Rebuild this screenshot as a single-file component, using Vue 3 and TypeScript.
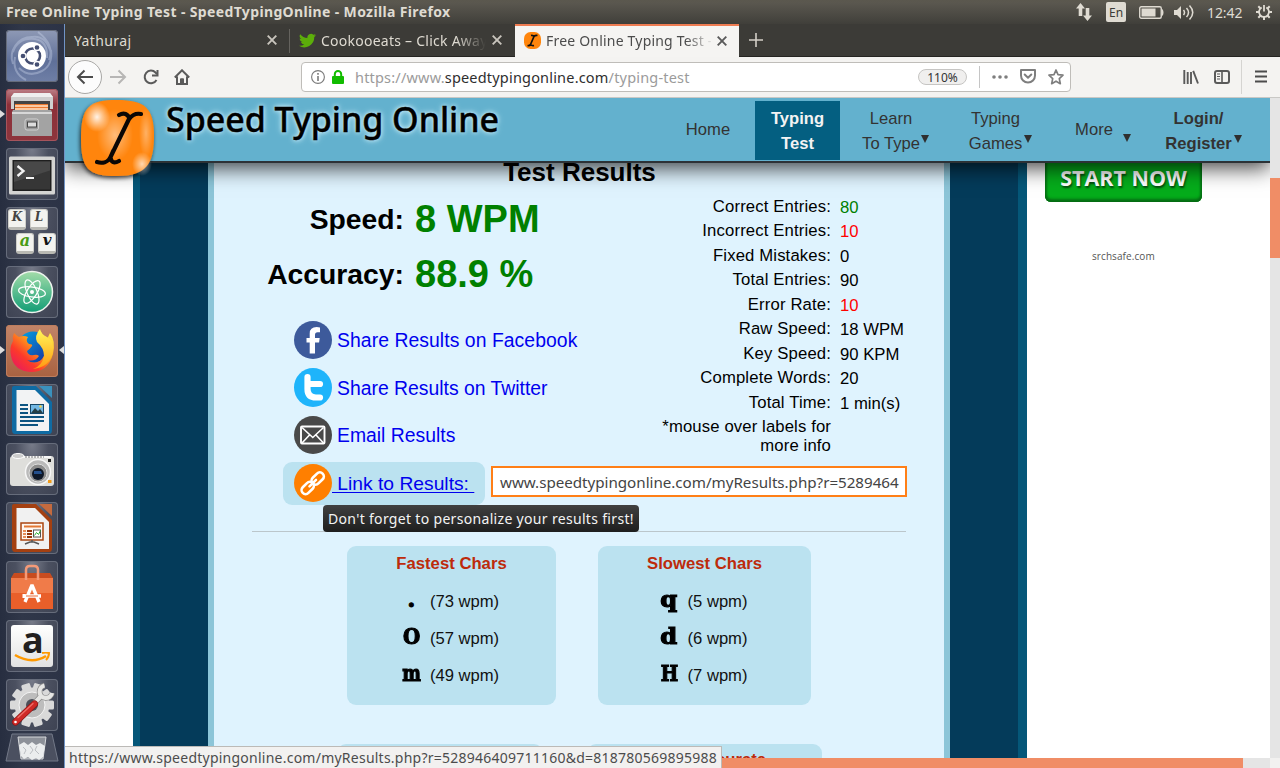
<script setup lang="ts">
interface Stat { label: string; value: string; tone?: string }
interface CharSpeed { glyph: string; speed: string; stretch: number }

const stats: Stat[] = [
  { label: 'Correct Entries:', value: '80', tone: 'good' },
  { label: 'Incorrect Entries:', value: '10', tone: 'bad' },
  { label: 'Fixed Mistakes:', value: '0' },
  { label: 'Total Entries:', value: '90' },
  { label: 'Error Rate:', value: '10', tone: 'bad' },
  { label: 'Raw Speed:', value: '18 WPM' },
  { label: 'Key Speed:', value: '90 KPM' },
  { label: 'Complete Words:', value: '20' },
  { label: 'Total Time:', value: '1 min(s)' },
]

const charCards: { title: string; kind: string; rows: CharSpeed[] }[] = [
  {
    title: 'Fastest Chars',
    kind: 'fast',
    rows: [
      { glyph: '.', speed: '(73 wpm)', stretch: 1 },
      { glyph: 'O', speed: '(57 wpm)', stretch: 0.9 },
      { glyph: 'm', speed: '(49 wpm)', stretch: 0.8 },
    ],
  },
  {
    title: 'Slowest Chars',
    kind: 'slow',
    rows: [
      { glyph: 'q', speed: '(5 wpm)', stretch: 1.1 },
      { glyph: 'd', speed: '(6 wpm)', stretch: 1.1 },
      { glyph: 'H', speed: '(7 wpm)', stretch: 0.84 },
    ],
  },
]
</script>

<template>
  <div class="desktop">
    <header class="panel">
      <span class="panel-title">Free Online Typing Test - SpeedTypingOnline - Mozilla Firefox</span>
      <div class="indicators">
        <svg class="i-net" width="18" height="18" viewBox="0 0 18 18" fill="#dfdbd2"><path d="M5.5 0 10 5.500H7.300V13H3.700V5.500H1zM12.500 18 8 12.500h2.700V5h3.600v7.500H17z" /></svg>
        <span class="lang">En</span>
        <svg class="i-bat" width="25" height="13" viewBox="0 0 25 13"><rect x=".75" y=".75" width="21.500" height="11.500" rx="1.500" fill="none" stroke="#dfdbd2" stroke-width="1.400" /><rect x="2.500" y="2.500" width="14" height="8" fill="#dfdbd2" /><path d="M23 3.500q1.500 3 0 6" fill="none" stroke="#dfdbd2" stroke-width="1.500" /></svg>
        <svg class="i-vol" width="21" height="17" viewBox="0 0 21 17"><path d="M0 6h3l4-4v13l-4-4H0z" fill="#dfdbd2" /><path d="M9.500 6q2 2.500 0 5M12.500 4q4 4.500 0 9M15.500 1.500q6.500 7 0 14" fill="none" stroke="#dfdbd2" stroke-width="1.500" /></svg>
        <span class="clock">12:42</span>
        <svg class="i-gear" width="16" height="16" viewBox="0 0 16 16" fill="none" stroke="#dfdbd2"><path d="M5.700 3.500a5 5 0 1 0 4.600 0" stroke-width="1.800" /><path d="M8 1v6.500" stroke-width="1.800" /><path d="M2.300 2.300 4.500 4.500M13.700 2.300 11.500 4.500M0 8h3M13 8h3M2.300 13.700l2.200-2.200M13.700 13.700l-2.200-2.200M8 13v3" stroke-width="2" /></svg>
      </div>
    </header>

    <div class="workspace">
      <nav class="launcher">
        <div class="tile dash">
          <svg width="52" height="52" viewBox="0 0 52 52" fill="none">
            <path d="M7 34A20 20 0 0 1 26 7q14-2 19 16M45 20q2 15-9 21-13 7-23-3M7 22Q12 7 29 9q13 2 12 19M20 50Q6 43 9 27M32 2q17 13 11 28" stroke="#c9d3e8" stroke-opacity=".4" stroke-width="2" />
            <circle cx="26" cy="26" r="14" fill="#fff" />
            <circle cx="26.500" cy="26" r="7.500" stroke="#454f72" stroke-width="2.600" />
            <g fill="#454f72" stroke="#fff" stroke-width="1.300"><circle cx="17" cy="26" r="3" /><circle cx="31" cy="17.500" r="3" /><circle cx="31" cy="34.500" r="3" /></g>
          </svg>
        </div>
        <div class="tile files">
          <span class="arrow-left"></span>
          <svg width="52" height="52" viewBox="0 0 52 52">
            <path d="M8 4h36l3 4v12H5V8z" fill="#cfcfcf" /><path d="M8 4h36l3 4H5z" fill="#efefef" />
            <rect x="8" y="12" width="36" height="14" fill="#444" /><path d="M9 15h11l2 0h20v11H9z" fill="#ec7a30" /><path d="M9 17h33M9 20h33" stroke="#ffe3c8" stroke-width="1.300" />
            <path d="M7 21h38l1 2v24H6V23z" fill="#a3a3a3" /><path d="M6 23h40v2H6z" fill="#d8d8d8" />
            <rect x="19" y="30" width="13.500" height="11" rx="2" fill="#9a9a9a" stroke="#d0d0d0" /><rect x="21.500" y="33" width="9" height="5" fill="#ddd" stroke="#444" stroke-width="1" />
          </svg>
        </div>
        <div class="tile">
          <svg width="52" height="52" viewBox="0 0 52 52">
            <rect x="3" y="8.500" width="46" height="38" rx="1.500" fill="#d4d4d2" /><rect x="6.500" y="12" width="39" height="31" fill="#1e1e1e" /><rect x="8" y="13.500" width="36" height="28" fill="#363636" /><path d="M8 13.500h36v9L8 34z" fill="#484848" />
            <path d="m11.500 18 6 5-6 5" stroke="#f4f4f4" stroke-width="2.300" fill="none" /><path d="M20 30h8" stroke="#f4f4f4" stroke-width="2" />
          </svg>
        </div>
        <div class="tile keys">
          <span class="key">K</span><span class="key">L</span><span class="key green">a</span><span class="key black">v</span>
        </div>
        <div class="tile">
          <svg width="52" height="52" viewBox="0 0 52 52">
            <defs><linearGradient id="atomFill" x1="0" y1="0" x2="0" y2="1"><stop offset="0" stop-color="#a3dca9" /><stop offset="1" stop-color="#119d75" /></linearGradient></defs>
            <circle cx="26" cy="26" r="20.500" fill="url(#atomFill)" stroke="#eef3ee" stroke-width="1.500" />
            <g fill="none" stroke="#fff" stroke-width="1.200"><ellipse cx="26" cy="26" rx="13.500" ry="5" transform="rotate(8 26 26)" /><ellipse cx="26" cy="26" rx="13" ry="5" transform="rotate(66 26 26)" /><ellipse cx="26" cy="26" rx="13" ry="5" transform="rotate(122 26 26)" /></g>
            <circle cx="26" cy="26" r="2" fill="#fff" />
          </svg>
        </div>
        <div class="tile firefox">
          <span class="arrow-left"></span><span class="arrow-right"></span>
          <svg width="52" height="52" viewBox="0 0 52 52">
            <defs>
              <linearGradient id="fox" x1="1" y1="0" x2="0" y2="1"><stop offset="0" stop-color="#fff44f" /><stop offset=".35" stop-color="#ffa51a" /><stop offset=".65" stop-color="#fc3a2a" /><stop offset="1" stop-color="#e2106f" /></linearGradient>
              <linearGradient id="globe" x1="0" y1="0" x2="1" y2="1"><stop offset="0" stop-color="#00a7e6" /><stop offset="1" stop-color="#1b2f9c" /></linearGradient>
              <linearGradient id="flame" x1="0" y1="0" x2="0" y2="1"><stop offset="0" stop-color="#fff85a" /><stop offset="1" stop-color="#ff9a12" /></linearGradient>
            </defs>
            <circle cx="27" cy="22" r="15.500" fill="url(#globe)" />
            <path d="M8 8q3 3 5 4 5-2 9 0-3 4 1 7 4 0 3 2-2 3-5 5 1 5 7 4 3-1 5 1-4 6-12 4 8 6 15-1 5-6 2-14l6-12q6 8 3 21-5 18-22 18Q8 46 5 31 3 23 7 16q-1-4 1-8z" fill="url(#fox)" />
            <path d="M34 4q-6 7-3 13 7 6 7 14-2 10-11 13 17-2 20-17Q48 15 41 12q-6-3-7-8z" fill="url(#flame)" />
          </svg>
        </div>
        <div class="tile">
          <svg width="52" height="52" viewBox="0 0 52 52">
            <path d="M8 2h22l16 16v28q0 4-3 4H9q-3 0-3-4V4q0-2 2-2z" fill="#0f6ba3" /><path d="M33 2h13v12z" fill="#3a91bd" />
            <path d="M10.500 6H29l14 14v27H10.500z" fill="#f2f3f4" /><rect x="24" y="20" width="14" height="10" fill="#174766" /><rect x="25" y="21" width="12" height="8" fill="#72b8e4" /><path d="m25 29 4-5 3 3 2-2 3 4z" fill="#263f45" /><circle cx="34.500" cy="22.500" r="1.200" fill="#f8d44a" />
            <path d="M14 21h8M14 25h8M14 29h8M14 33h24M14 37h24M14 41h18" stroke="#0d5582" stroke-width="1.800" />
          </svg>
        </div>
        <div class="tile">
          <svg width="52" height="52" viewBox="0 0 52 52">
            <rect x="4" y="13" width="44" height="30" rx="3" fill="#dededb" /><path d="M7 13h38v2H7z" fill="#f7f7f7" /><ellipse cx="12" cy="13" rx="6" ry="2.500" fill="#ccc" stroke="#fff" /><path d="M19 14h19" stroke="#777" stroke-dasharray="2 1" />
            <rect x="42" y="16" width="3" height="3" fill="#222" /><circle cx="32" cy="29" r="12.500" fill="#bababa" stroke="#f7f7f7" stroke-width="1.500" /><circle cx="32" cy="30" r="9" fill="#8c8c8c" stroke="#ddd" /><circle cx="32" cy="31" r="6" fill="#0e1828" /><path d="M28 28h7l1 3h-8z" fill="#244f8c" />
            <rect x="42" y="37" width="3.500" height="3" fill="#f29b17" />
          </svg>
        </div>
        <div class="tile">
          <svg width="52" height="52" viewBox="0 0 52 52">
            <path d="M8 2h22l16 16v28q0 4-3 4H9q-3 0-3-4V4q0-2 2-2z" fill="#a44011" /><path d="M33 2h13v12z" fill="#c46a3e" />
            <path d="M10.500 6H29l14 14v27H10.500z" fill="#f1f1f1" /><rect x="15" y="21" width="22" height="17" fill="#fff7f1" stroke="#aa4511" stroke-width="1.500" /><path d="M18 24.500h17" stroke="#e27835" stroke-width="2" />
            <path d="M17 29h3M17 32h3M17 35h3" stroke="#e78d57" stroke-width="2" /><path d="M21 29h5M21 32h5M21 35h5" stroke="#943509" stroke-width="2" /><rect x="27.500" y="28" width="7" height="7" fill="#fff" stroke="#555" /><path d="m28.500 33.500 2-3 2 2 2-4" fill="none" stroke="#2aae32" /><path d="M26 38v2m-7 2 5-2h4l5 2" fill="none" stroke="#555" stroke-width="1.500" />
          </svg>
        </div>
        <div class="tile">
          <svg width="52" height="52" viewBox="0 0 52 52">
            <path d="M5 17h42v31H5z" fill="#e95f2a" /><path d="m5 17 3-5h36l3 5z" fill="#c84c1f" /><path d="M5 17h42v15H5z" fill="#f07b49" /><path d="M20 19V9q0-4 4-4h4q4 0 4 4v10" fill="none" stroke="#f49a78" stroke-width="2.500" />
            <path d="M19 41 26 24l7 17M17 35h18" fill="none" stroke="#fff" stroke-width="3.300" stroke-linejoin="bevel" /><path d="M16.500 35h3" stroke="#fff" stroke-width="4" /><path d="M20 35h12" stroke="#e96b37" stroke-width="1" />
          </svg>
        </div>
        <div class="tile amazon">
          <span class="amazon-a">a</span>
          <svg width="36" height="12" viewBox="0 0 36 12"><path d="M1 3q17 10 31 1" fill="none" stroke="#f90" stroke-width="2.500" /><path d="M28 1q4-1 7 0 0 4-3 7" fill="none" stroke="#f90" stroke-width="2" /></svg>
        </div>
        <div class="tile">
          <svg width="52" height="52" viewBox="0 0 52 52">
            <g fill="#d9d9d9"><circle cx="26" cy="26" r="17.500" /><g v-for="n in 5" :key="n"><rect x="21.500" y="4" width="9" height="44" rx="1.500" :transform="`rotate(${n * 36 - 18} 26 26)`" /></g></g>
            <circle cx="26" cy="26" r="13" fill="#bdbdbd" stroke="#f4f4f4" /><circle cx="26" cy="26" r="6" fill="#4b4e58" />
            <g fill="none"><path d="M24 29 36 16M38.500 6.500A6.300 6.300 0 1 0 46 14" stroke="#8a8a8a" stroke-width="5.600" /><path d="M24 29 36 16M38.500 6.500A6.300 6.300 0 1 0 46 14" stroke="#e6e6e4" stroke-width="4.200" /></g>
            <g fill="none" stroke-linecap="round"><path d="M28.500 25 9.500 43" stroke="#8b1514" stroke-width="7" /><path d="M28.500 25 9.500 43" stroke="#cf2a27" stroke-width="5.600" /><path d="M27 24.500 12 38.500" stroke="#ee6f68" stroke-width="1.300" /></g><circle cx="9.500" cy="43" r="1.300" fill="#fff" />
          </svg>
        </div>
        <svg class="trash" width="56" height="30" viewBox="0 0 56 30">
          <path d="M8 1h40l6 27H2z" fill="#4b5060" stroke="#737988" /><path d="M14 4h28l-3 22H17z" fill="#a9adb2" fill-opacity=".7" stroke="#d6d8db" /><path d="m15 12 5-3 4 3 4-3 4 3 4-2 5 3-2 11-4 3-3-2-4 2-4-3-4 2-3-3z" fill="#ebedee" /><path d="m19 14 3 3-2 4M26 13l3 4-3 4M33 13l-2 4 4 4" fill="none" stroke="#bbbec2" />
        </svg>
      </nav>

      <main class="browser">
        <div class="tabs">
          <div class="tab t1"><span class="tab-text yath">Yathuraj</span><svg class="x" width="10" height="10" viewBox="0 0 10 10"><path d="m.7.7 8.600 8.600M9.300.7.7 9.300" /></svg></div>
          <div class="tab t2">
            <svg class="bird" width="17" height="17" viewBox="0 0 24 24" fill="#5cae0a"><path d="M24 4.600a10 10 0 0 1-2.800.8 5 5 0 0 0 2.200-2.700 10 10 0 0 1-3.100 1.200 5 5 0 0 0-8.400 4.500A14 14 0 0 1 1.700 3.100a5 5 0 0 0 1.500 6.600 5 5 0 0 1-2.200-.6 5 5 0 0 0 3.900 4.900 5 5 0 0 1-2.200.1 5 5 0 0 0 4.600 3.400A10 10 0 0 1 0 19.500 14 14 0 0 0 21.500 7.100 10 10 0 0 0 24 4.600z" /></svg>
            <span class="tab-text cook">Cookooeats – Click Away</span><svg class="x" width="10" height="10" viewBox="0 0 10 10"><path d="m.7.7 8.600 8.600M9.300.7.7 9.300" /></svg>
          </div>
          <div class="tab t3">
            <svg width="17" height="17" viewBox="0 0 17 17"><rect width="17" height="17" rx="6.500" fill="#ff850c" /><path d="M7 3.500q2-.5 3 1 1.500-1.500 3.500-1M10 4.500l-3.500 8M3.500 13.500q2 .5 3-1 1.500 1.500 3.500 1" fill="none" stroke="#111" stroke-width="1.700" /></svg>
            <span class="tab-text free">Free Online Typing Test -</span><svg class="x" width="10" height="10" viewBox="0 0 10 10"><path d="m.7.7 8.600 8.600M9.300.7.7 9.300" /></svg>
          </div>
          <svg class="plus" width="14" height="14" viewBox="0 0 14 14"><path d="M7 0v14M0 7h14" stroke="#d3cfc7" stroke-width="1.600" /></svg>
        </div>

        <div class="toolbar">
          <span class="back"><svg width="18" height="16" viewBox="0 0 18 16" fill="none" stroke="#4c4c4c" stroke-width="2"><path d="M17 8H2M8.500 1.500 2 8l6.500 6.500" /></svg></span>
          <svg class="fwd" width="18" height="16" viewBox="0 0 18 16" fill="none" stroke="#b7b6b5" stroke-width="2"><path d="M1 8h15M9.500 1.500 16 8l-6.500 6.500" /></svg>
          <svg class="reload" width="16" height="16" viewBox="0 0 16 16" fill="none" stroke="#5a5a5a" stroke-width="2"><path d="M13.500 11A6.300 6.300 0 1 1 12.500 3.500L14 5.200" /><path d="M14.500 1v5.500H9" /></svg>
          <svg class="home" width="16" height="16" viewBox="0 0 16 16" fill="none" stroke="#5a5a5a" stroke-width="2"><path d="M.8 8.500 8 1.300l7.200 7.200M3 7.500V15h10V7.500" /><path d="M6.500 14.500V9.800h3v4.700" fill="#5a5a5a" stroke-width="1" /></svg>
          <div class="url">
            <svg class="info" width="14" height="14" viewBox="0 0 14 14" fill="none" stroke="#7a7a7a"><circle cx="7" cy="7" r="6.400" stroke-width="1.100" /><path d="M7 6v5M7 3v1.700" stroke-width="1.600" /></svg>
            <svg class="lock" width="12" height="14" viewBox="0 0 12 14"><rect y="6" width="12" height="8" rx="1" fill="#12bc00" /><path d="M2.800 6.500V4.200a3.200 3.200 0 0 1 6.400 0v2.300" fill="none" stroke="#12bc00" stroke-width="2" /></svg>
            <span class="address">https://www.<b>speedtypingonline.com</b>/typing-test</span>
            <span class="zoom">110%</span><i class="vsep"></i>
            <svg class="dots" width="16" height="4" viewBox="0 0 16 4" fill="#7e7e7e"><circle cx="2" cy="2" r="1.800" /><circle cx="8" cy="2" r="1.800" /><circle cx="14" cy="2" r="1.800" /></svg>
            <svg class="pocket" width="16" height="15" viewBox="0 0 16 15" fill="none" stroke="#7e7e7e" stroke-width="2" stroke-linejoin="round"><path d="M1 1h14v5.500a7 7 0 0 1-14 0z" /><path d="M4.700 5.500 8 8.700l3.300-3.200" stroke-linecap="round" /></svg>
            <svg class="star" width="16" height="16" viewBox="0 0 16 16" fill="none" stroke="#7e7e7e" stroke-width="1.700" stroke-linejoin="round"><path d="m8 1 2 4.700 5 .5-3.700 3.400 1 5.100L8 12.200l-4.300 2.500 1-5.100L1 6.200l5-.5z" /></svg>
          </div>
          <svg class="library" width="16" height="14" viewBox="0 0 16 14" stroke="#5a5a5a" stroke-width="1.900"><path d="M1.300 0v14M4.700 2v12M8 2v12M10.200.8 15 13.500" /></svg>
          <svg class="sidebar" width="16" height="14" viewBox="0 0 16 14" fill="none" stroke="#5a5a5a"><rect x="1" y="1" width="14" height="12" rx="2" stroke-width="2" /><path d="M8 1v12" stroke-width="1.600" /><path d="M3 4h3M3 6.500h3M3 9h3" stroke-width="1.200" /></svg>
          <i class="tsep"></i>
          <svg class="menu" width="12" height="13" viewBox="0 0 12 13" stroke="#4c4c4c" stroke-width="2"><path d="M0 1.500h12M0 6.500h12M0 11.500h12" /></svg>
        </div>

        <div class="view">
          <div class="page">
            <header class="site">
              <svg class="logo" width="86" height="88" viewBox="0 0 86 88">
                <defs>
                  <radialGradient id="shine"><stop offset="0" stop-color="#fff" stop-opacity=".9" /><stop offset="1" stop-color="#fff" stop-opacity="0" /></radialGradient>
                  <filter id="drop" x="-20%" y="-20%" width="150%" height="150%"><feDropShadow dx="-1" dy="2" stdDeviation="2" flood-opacity=".75" /></filter>
                </defs>
                <path d="M42 3C70 3 79 11 79 39S71 79 42 79 6 72 6 41 14 3 42 3z" fill="#ff850b" filter="url(#drop)" />
                <ellipse cx="22" cy="20" rx="13" ry="15" fill="url(#shine)" /><ellipse cx="67" cy="67" rx="10" ry="12" fill="url(#shine)" opacity=".75" /><ellipse cx="40" cy="38" rx="18" ry="26" fill="url(#shine)" opacity=".5" /><ellipse cx="71" cy="36" rx="7" ry="25" fill="url(#shine)" opacity=".4" />
                <path d="M44 18c5-3 9-1 10.500 3.500 3-4 6-5.500 11.500-4.500M54 22 36 59M22 65c5 1.500 11 .5 13.500-5 .5 5 3 7 8.500 4" fill="none" stroke="#0b0705" stroke-width="4.200" stroke-linecap="round" />
              </svg>
              <span class="brand">Speed Typing Online</span>
              <ul class="nav">
                <li class="n-home">Home</li>
                <li class="n-test">Typing<br />Test</li>
                <li class="n-learn">Learn<br />To Type<i></i></li>
                <li class="n-games">Typing<br />Games<i></i></li>
                <li class="n-more">More<i></i></li>
                <li class="n-login">Login/<br />Register<i></i></li>
              </ul>
            </header>

            <div class="columns">
              <article class="results">
                <h1>Test Results</h1>
                <div class="summary">
                  <div class="left">
                    <div class="score"><span>Speed:</span><strong class="wpm">8 WPM</strong></div>
                    <div class="score"><span>Accuracy:</span><strong>88.9 %</strong></div>
                    <div class="shares">
                      <a class="share"><svg width="38" height="38" viewBox="0 0 38 38"><circle cx="19" cy="19" r="19" fill="#3d5a9b" /><path d="M26 6.500v4.800h-2.500q-2.500 0-2.500 2.500V17h4.700l-.6 4.500H21v11h-5.300v-11H12.500V17h3.200v-4.500q0-6.500 7-6.500z" fill="#fff" /></svg><span class="sf">Share Results on Facebook</span></a>
                      <a class="share"><svg width="38" height="39" viewBox="0 0 38 39"><ellipse cx="19" cy="19.500" rx="19" ry="19.500" fill="#1eb4fb" /><path d="M13.500 9v12q0 8.500 8.500 8.500h4M13.500 16h12.500" fill="none" stroke="#fff" stroke-width="6.200" stroke-linecap="round" /></svg><span class="st">Share Results on Twitter</span></a>
                      <a class="share"><svg width="38" height="38" viewBox="0 0 38 38"><circle cx="19" cy="19" r="19" fill="#494949" /><g fill="none" stroke="#fff" stroke-width="1.900"><rect x="7" y="10.500" width="23.500" height="17" rx="1" /><path d="m8 11.500 10.800 10 10.700-10M8 27l7.500-8M29.500 27 22 19" stroke-width="1.600" /></g></svg><span class="se">Email Results</span></a>
                    </div>
                  </div>
                  <div class="stats">
                    <div v-for="s in stats" :key="s.label" class="stat"><span>{{ s.label }}</span><em :class="s.tone">{{ s.value }}</em></div>
                    <p>*mouse over labels for<br />more info</p>
                  </div>
                </div>

                <div class="link-row">
                  <a class="link-box"><svg width="38" height="38" viewBox="0 0 38 38"><circle cx="19" cy="19" r="19" fill="#ff7f00" /><g fill="none" stroke="#fff" stroke-width="2.600"><rect x="16.700" y="10.500" width="14" height="8" rx="4" transform="rotate(-45 23.700 14.500)" /><rect x="6.700" y="20" width="14" height="8" rx="4" transform="rotate(-45 13.700 24)" /></g><path d="m15.500 22.300 6.500-6.500" stroke="#fff" stroke-width="2.600" stroke-linecap="round" /></svg><span>&nbsp;Link to Results:&nbsp;</span></a>
                  <div class="field"><span>www.speedtypingonline.com/myResults.php?r=5289464</span></div>
                  <div class="tooltip"><span>Don't forget to personalize your results first!</span></div>
                </div>

                <hr />

                <div class="cards">
                  <section v-for="card in charCards" :key="card.title" class="card" :class="card.kind">
                    <h2>{{ card.title }}</h2>
                    <div v-for="row in card.rows" :key="row.glyph" class="char-row">
                      <span class="glyph"><b :style="{ transform: `scaleX(${row.stretch})` }">{{ row.glyph }}</b></span><span>{{ row.speed }}</span>
                    </div>
                  </section>
                </div>
                <div class="cards more">
                  <section class="card most"></section>
                  <section class="card least"><h2>Least Accurate</h2></section>
                </div>
              </article>

              <aside class="ad">
                <div class="start">START NOW</div>
                <span class="ad-site">srchsafe.com</span>
              </aside>
            </div>
          </div>
          <div class="vbar"><i></i></div>
          <div class="hbar"><i></i></div>
          <div class="corner"></div>
          <div class="status"><span>https://www.speedtypingonline.com/myResults.php?r=528946409711160&amp;d=818780569895988</span></div>
        </div>
      </main>
    </div>
  </div>
</template>

<style>
html, body { margin: 0; overflow: hidden; }
</style>

<style scoped>
* { box-sizing: border-box; }
.desktop { width: 1280px; height: 768px; overflow: hidden; display: flex; flex-direction: column; font-family: "Noto Sans", "Open Sans", sans-serif; font-size: 14px; white-space: nowrap; }
svg { display: block; flex: none; }
.panel { height: 24px; flex: none; display: flex; align-items: center; justify-content: space-between; background: linear-gradient(#5b584e, #5a574f 3px, #403f3a); color: #dfdbd2; padding: 0 8px 0 6px; }
.panel-title { font-weight: 700; line-height: 24px; letter-spacing: 0.36px; }
.indicators { display: flex; align-items: center; }
.lang { width: 20px; height: 20px; margin: 0 13px 0 13px; background: #dfdbd2; border-radius: 2px; color: #3c3b37; font-size: 12px; line-height: 21px; text-align: center; }
.i-vol { margin-left: 10px; }
.clock { width: 37px; margin: 0 12px 0 12px; letter-spacing: -0.1px; }
.workspace { flex: 1; min-height: 0; display: flex; }

.launcher { width: 65px; flex: none; padding: 6px 0 0 6px; display: flex; flex-direction: column; gap: 7px; background: linear-gradient(90deg, #272e40, #303749 35%, #2c3346); border-right: 1px solid #7194c6; position: relative; z-index: 6; }
.tile { width: 52px; height: 52px; flex: none; border-radius: 4px; position: relative; background: radial-gradient(ellipse at 50% 0, #787c8a 0, #4b5060 45%, #3d4252 100%); box-shadow: inset 0 0 0 1px #666c7b; }
.dash { background: linear-gradient(#8e99b5, #5f7099 60%, #6f7fa6); }
.files { background: linear-gradient(#bd8088, #8d3039 30%, #8d353d); box-shadow: inset 0 0 0 1px #a6545c; }
.firefox { background: linear-gradient(#c18468, #a86241); box-shadow: inset 0 0 0 1px #bd7d5e; }
.arrow-left, .arrow-right { position: absolute; top: 21px; width: 0; height: 0; border: 4.500px solid transparent; }
.arrow-left { left: -6px; border-left: 5px solid #ddd; border-right: 0; }
.arrow-right { right: -6px; border-right: 5px solid #ddd; border-left: 0; }
.keys { display: grid; grid-template-columns: 18px 18px; align-content: start; gap: 3px 4px; padding: 2px 0 0 2px; }
.key { width: 18px; height: 21px; background: #f3f3ef; border: 1px solid #cfcfc9; border-bottom: 3px solid #b9b9b3; border-radius: 3px; font: italic bold 12px/15px "DejaVu Serif", serif; text-align: center; color: #444; }
.key:nth-child(n+3) { transform: translateX(8px); }
.key.green { color: #489b13; font-size: 16px; line-height: 13px; }
.key.black { color: #111; font-size: 15px; line-height: 13px; }
.amazon { padding: 5px; }
.amazon::before { content: ""; position: absolute; inset: 5px; background: linear-gradient(#fff, #e2e2e2); border-radius: 3px; }
.amazon-a { position: absolute; left: 16px; top: 3px; font: bold 36px/33px "Open Sans", sans-serif; color: #221f1f; }
.amazon svg { position: absolute; left: 8px; top: 32px; }
.trash { margin: -5px 0 0 -2px; }

.browser { flex: 1; min-width: 0; display: flex; flex-direction: column; }
.tabs { height: 33px; flex: none; display: flex; background: #3c3b37; color: #dfdbd2; border-bottom: 1px solid #262522; }
.tab { display: flex; align-items: center; position: relative; font-size: 14px; }
.t1 { width: 225px; padding: 0 13px 0 9px; justify-content: space-between; }
.t1::after { content: ""; position: absolute; right: 0; top: 5px; height: 24px; width: 1px; background: #65635e; }
.t2 { width: 225px; padding-left: 9px; }
.t3 { width: 224px; height: 33px; padding: 0 0 2px 9px; background: #f5f4f2; color: #4c4c4c; border-top: 2px solid #ee7c52; }
.tab-text { overflow: hidden; }
.x { stroke: #c9c5bd; stroke-width: 1.900; fill: none; }
.t3 .x { stroke: #5a5a5a; }
.yath { letter-spacing: .38px; }
.cook { width: 165px; margin: 0 6px 0 5px; letter-spacing: .25px; mask-image: linear-gradient(90deg, #000 135px, transparent 165px); }
.free { width: 165px; margin: 0 6px 0 5px; letter-spacing: .2px; mask-image: linear-gradient(90deg, #000 140px, transparent 168px); }
.plus { margin: 9px 0 0 10px; }
.toolbar { height: 41px; flex: none; display: flex; align-items: center; padding: 0 13px 1px 3px; background: #f4f3f1; border-bottom: 1px solid #c9c8c5; }
.back { width: 34px; height: 34px; border: 1px solid #a9a8a6; border-radius: 50%; background: #fcfcfc; display: grid; place-items: center; }
.fwd { margin-left: 7px; }
.reload { margin-left: 16px; }
.home { margin-left: 15px; }
.url { width: 770px; height: 30px; margin-left: 111px; border: 1px solid #bfbdb9; border-radius: 4px; background: #fff; display: flex; align-items: center; padding-left: 9px; }
.lock { margin-left: 7px; }
.address { width: 545px; margin-left: 11px; font-size: 14.500px; letter-spacing: .19px; color: #9b9b9b; }
.address b { font-weight: 400; color: #2e2e2e; }
.zoom { width: 49px; height: 16px; margin-left: 18px; border: 1px solid #c6c5c3; border-radius: 8px; background: #f0efee; font-size: 12px; line-height: 15px; text-align: center; color: #333; }
.vsep { width: 1px; height: 22px; margin: 0 12px; background: #c5c5c5; }
.pocket { margin-left: 12px; }
.star { margin-left: 12px; }
.library { margin-left: 112px; }
.sidebar { margin-left: 15px; }
.tsep { width: 1px; height: 34px; margin: 0 13px 0 11px; background: #d5d4d1; }

.view { flex: 1; min-height: 0; display: grid; grid-template-columns: 1205px 10px; grid-template-rows: 660px 10px; position: relative; font-family: "Liberation Sans", Arial, sans-serif; }
.page { height: 660px; overflow: hidden; display: flex; flex-direction: column; background: #fff; }
.site { height: 65px; flex: none; position: relative; z-index: 3; background: #63b1ce; border-bottom: 2px solid #2c3236; box-shadow: 0 5px 20px rgba(0, 0, 0, .75); display: flex; clip-path: inset(0 0 -60px 0); }
.logo { position: absolute; left: 10px; top: -1px; }
.brand { width: 500px; flex: none; padding-left: 101px; font: 500 34px/43px "Noto Sans", sans-serif; letter-spacing: -.04px; color: #000; -webkit-text-stroke: .4px #000; text-shadow: 0 0 4px #d8f4ff, 0 0 7px #b9e5f5; }
.nav { margin: 0; padding: 3px 0 0; list-style: none; display: flex; color: #333; font-size: 16.600px; line-height: 25px; text-align: center; }
.nav li { position: relative; height: 59px; padding-top: 5px; }
.nav i { position: absolute; top: 34px; border: 4.500px solid transparent; border-top: 8px solid #2f2f2f; border-bottom: 0; }
.nav .n-home { width: 94px; margin-left: 96px; padding-top: 16px; }
.nav .n-test { width: 85px; background: #045f81; color: #f3f3f3; font-weight: 700; }
.n-learn { width: 102px; }
.n-learn i { left: 81px; }
.n-games { width: 107px; }
.n-games i { left: 82px; }
.nav .n-more { width: 90px; padding-top: 16px; }
.nav .n-more i { left: 74px; top: 33px; }
.n-login { width: 119px; font-weight: 700; }
.n-login i { left: 95px; }
.columns { flex: 1; min-height: 0; display: flex; padding-left: 68px; }
.results { width: 894px; height: 700px; flex: none; border-left: 7px solid #055779; border-right: 9px solid #055779; background: linear-gradient(90deg, #043b5a 68px, #8cc5d8 68px 74px, #dff3fe 74px 804px, #8cc5d8 804px 810px, #043b5a 810px); padding: 0 68px 0 74px; }
h1 { margin: -6px 0 0; font-size: 26px; line-height: 31px; text-align: center; color: #000; padding-right: 5px; }
.summary { display: flex; height: 274px; color: #000; }
.left { width: 400px; padding-top: 4px; }
.score { height: 55px; display: flex; align-items: center; font-size: 28.300px; font-weight: 700; }
.score span { width: 190px; text-align: right; margin-right: 11px; }
.score strong { font-size: 38px; color: #008000; }
.shares { margin-top: 15px; padding-left: 80px; }
.share { height: 47.600px; display: flex; align-items: center; gap: 5px; color: #0000ee; font-size: 19.360px; }
.share svg { margin-top: -2px; }
.sf { letter-spacing: .06px; }
.stats { width: 330px; padding-top: 7px; font-size: 16.700px; }
.stat { height: 24.450px; line-height: 24.450px; display: flex; }
.stat span { width: 217px; text-align: right; margin-right: 9px; letter-spacing: .14px; }
.stat em { font-style: normal; position: relative; top: 1px; }
.good { color: #008000; }
.bad { color: #f00; }
.stats p { width: 217px; margin: 2px 0 0; line-height: 19.300px; text-align: right; letter-spacing: .12px; }
.link-row { display: flex; align-items: flex-start; position: relative; padding-left: 69px; height: 69px; }
.link-box { width: 202px; height: 43px; padding-left: 11px; border-radius: 9px; background: #bbe2f0; display: flex; align-items: center; color: #0000ee; font-size: 19.250px; }
.link-box svg { margin-top: -2px; }
.link-box span { text-decoration: underline; text-underline-offset: 2px; text-decoration-thickness: 1px; }
.field { width: 416px; height: 31px; margin: 4px 0 0 6px; border: 2px solid #ff7f17; background: #fff; padding: 0 7px; line-height: 28px; font-family: "Noto Sans", sans-serif; font-size: 15.200px; letter-spacing: -.03px; color: #444; overflow: hidden; }
.tooltip { position: absolute; left: 109px; top: 43px; z-index: 2; width: 316px; height: 27px; padding-left: 5px; border-radius: 4px; background: linear-gradient(#404040, #1e1e1e); color: #f4f4f4; font-family: "Noto Sans", sans-serif; font-size: 14px; letter-spacing: .32px; line-height: 27px; }
hr { width: 654px; margin: 0 0 0 38px; border: 0; height: 1px; background: #bbc6cb; }
.cards { display: flex; gap: 42px; padding-left: 133px; margin-top: 14px; }
.card { height: 159px; border-radius: 9px; background: #bbe2f0; display: flex; flex-direction: column; align-items: center; font-size: 16.600px; color: #111; }
.card h2 { margin: 8px 0 7px; font-size: 16.700px; line-height: 20px; color: #bd2b0b; }
.fast { width: 209px; }
.slow { width: 213px; }
.char-row { height: 37px; line-height: 37px; display: flex; align-items: baseline; gap: 10px; margin-left: -1px; }
.glyph { width: 17px; display: flex; justify-content: center; }
.glyph b { font: bold 22px/37px "DejaVu Serif", serif; color: #000; -webkit-text-stroke: 1.2px #000; }
.more { margin-top: 39px; padding-left: 123px; gap: 44px; }
.most { width: 206px; }
.least { width: 235px; padding-left: 4px; }
.least h2 { margin-top: 6px; }
.ad { position: relative; flex: 1; padding-left: 18px; display: flex; flex-direction: column; align-items: flex-start; }
.start { width: 157px; height: 50px; margin-top: -11px; border-radius: 6px; background: #05ad1b; box-shadow: inset 0 -3px 3px #056b13, inset 2px 0 2px #077a17, inset -2px 0 2px #077a17; font: bold 21.500px/51px "Open Sans", sans-serif; color: #fff; text-align: center; text-shadow: 1px 2px 2px #044b0d; }
.ad-site { margin: 46px 0 0 47px; font: 10px/16px "Open Sans", sans-serif; letter-spacing: .08px; color: #555; }
.vbar { background: #e5e5e5; padding-top: 80px; }
.vbar i { display: block; height: 80px; background: #f08d66; }
.hbar { background: #e5e5e5; }
.hbar i { display: block; width: 1178px; height: 10px; background: #f08d66; }
.corner { background: #f2f1f0; }
.status { position: absolute; left: 0; bottom: 0; z-index: 5; width: 657px; height: 22px; padding-left: 4px; background: #f2f1f0; border: 1px solid #bcbab7; border-width: 1px 1px 0 0; font: 14px/22px "Noto Sans", sans-serif; letter-spacing: .24px; color: #4c4c4c; }
</style>
